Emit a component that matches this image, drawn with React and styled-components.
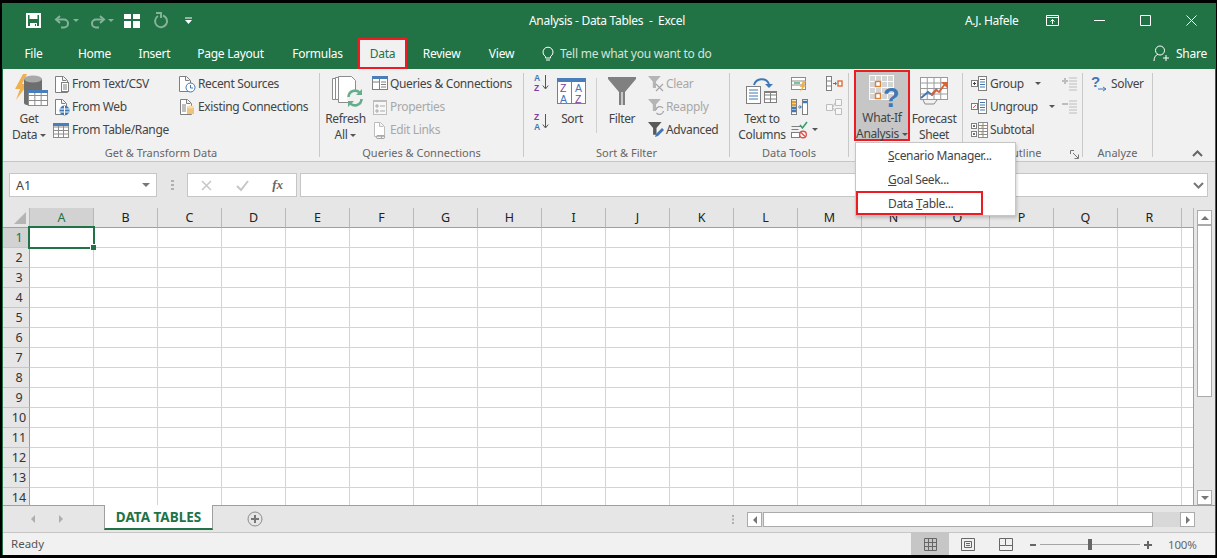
import React from "react";
import styled, { createGlobalStyle } from "styled-components";

const GREEN = "#217346";
const RED = "#ed1c24";
const COLS = "ABCDEFGHIJKLMNOPQR".split("");
const ROWS = Array.from({ length: 14 }, (_, i) => i + 1);

const TABS = [
  { name: "File", w: 61 },
  { name: "Home", w: 61 },
  { name: "Insert", w: 59 },
  { name: "Page Layout", w: 93 },
  { name: "Formulas", w: 81 },
  { name: "Data", w: 49, active: true },
  { name: "Review", w: 69 },
  { name: "View", w: 51 },
];

const Global = createGlobalStyle`
  html, body { margin: 0; background: #000; overflow: hidden; }
  body { font-family: "Noto Sans", "Open Sans", Arial, sans-serif; font-size: 12px; color: #444; }
`;

const Window = styled.div`
  width: 1212px;
  height: 552px;
  margin: 3px 0 0 3px;
  background: ${GREEN};
  box-shadow: -1px 0 0 ${GREEN}, 1px 0 0 ${GREEN}, 0 1px 0 ${GREEN};
  display: flex;
  flex-direction: column;
  overflow: hidden;
`;

const TitleBar = styled.div`
  height: 35px;
  flex: none;
  display: flex;
  align-items: center;
  color: #fff;
`;

const Qat = styled.div`
  width: 526px;
  flex: none;
  padding-left: 23px;
  box-sizing: border-box;
  display: flex;
  align-items: center;
`;

const QatSlot = styled.span`
  display: flex;
  width: ${(p) => p.$w}px;
  opacity: ${(p) => (p.$faded ? 0.45 : 1)};
`;

const QatCaret = styled.span`
  width: 0;
  height: 0;
  margin-left: -1px;
  border: 3px solid transparent;
  border-top: 3px solid #fff;
  border-bottom: 0;
`;

const Title = styled.div`
  font-size: 12px;
  white-space: pre;
  letter-spacing: -0.3px;
`;

const User = styled.div`
  margin-left: auto;
  width: 65px;
  font-size: 12px;
  letter-spacing: -0.3px;
`;

const WinBtn = styled.div`
  width: 46px;
  display: flex;
  justify-content: center;
`;

const WinEnd = styled.div`
  width: 1px;
`;

const TabBar = styled.div`
  height: 31px;
  flex: none;
  display: flex;
  align-items: stretch;
  color: #fff;
`;

const Tab = styled.div`
  width: ${(p) => p.$w}px;
  box-sizing: border-box;
  display: flex;
  align-items: center;
  justify-content: center;
  font-size: 12px;
  letter-spacing: -0.25px;
  ${(p) => p.$active && `
    background: #f1f1f1;
    color: ${GREEN};
    border: 2px solid ${RED};
  `}
`;

const TellMe = styled.div`
  margin-left: 15px;
  display: flex;
  align-items: center;
  gap: 6px;
  font-size: 12px;
  letter-spacing: -0.25px;
  color: #d3e3da;
`;

const Share = styled.div`
  margin-left: auto;
  padding-right: 8px;
  display: flex;
  align-items: center;
  gap: 7px;
  font-size: 12px;
  letter-spacing: -0.25px;
`;

const Ribbon = styled.div`
  height: 93px;
  flex: none;
  box-sizing: border-box;
  background: #f1f1f1;
  border-bottom: 1px solid #c6c6c6;
  padding-top: 4px;
  display: flex;
  align-items: flex-start;
`;

const Group = styled.div`
  position: relative;
  width: ${(p) => p.$w}px;
  height: 84px;
  flex: none;
  box-sizing: border-box;
  border-right: 1px solid #c9c9c9;
  display: flex;
  flex-direction: column;
`;

const GroupBody = styled.div`
  height: 75px;
  flex: none;
  margin-top: -1px;
  margin-bottom: 1px;
  display: flex;
  align-items: flex-start;
  padding-left: ${(p) => p.$pad || 0}px;
`;

const GroupLabel = styled.div`
  height: 9px;
  line-height: 10px;
  font-size: 11px;
  text-align: center;
  color: #666;
  white-space: nowrap;
`;

const Big = styled.div`
  width: ${(p) => p.$w}px;
  flex: none;
  display: flex;
  flex-direction: column;
  align-items: center;
  margin-top: 2px;
  margin-left: ${(p) => p.$ml || 0}px;
`;

const BigIcon = styled.div`
  height: 38px;
  flex: none;
  margin-top: -1px;
  display: flex;
  align-items: flex-start;
  justify-content: center;
`;

const BigText = styled.div`
  flex: none;
  line-height: 16px;
  text-align: center;
  white-space: nowrap;
  font-size: 12px;
  letter-spacing: -0.35px;
`;

const Caret = styled.span`
  display: inline-block;
  width: 0;
  height: 0;
  margin-left: ${(p) => p.$ml ?? 3}px;
  vertical-align: 2px;
  border: 3px solid transparent;
  border-top: 3px solid #555;
  border-bottom: 0;
`;

const Col = styled.div`
  width: ${(p) => p.$w}px;
  flex: none;
  display: flex;
  flex-direction: column;
  margin-left: ${(p) => p.$ml || 0}px;
`;

const Small = styled.div`
  height: 23px;
  display: flex;
  align-items: center;
  gap: 1px;
  white-space: nowrap;
  font-size: 12px;
  letter-spacing: -0.35px;
  color: ${(p) => (p.$off ? "#a8a8a8" : "#444")};
`;

const SortCell = styled.div`
  height: ${(p) => p.$h}px;
  padding-top: ${(p) => p.$top}px;
  box-sizing: border-box;
`;

const Divider = styled.div`
  width: 1px;
  height: 55px;
  margin: 6px 0 0 ${(p) => p.$ml || 0}px;
  background: #d0d0d0;
  flex: none;
`;

const WhatIf = styled.div`
  width: 56px;
  height: 71px;
  margin: -2px 0 0 0;
  flex: none;
  box-sizing: border-box;
  background: #c6c6c6;
  border: 2px solid ${RED};
  display: flex;
  flex-direction: column;
  align-items: center;
  padding-top: 3px;
`;

const Menu = styled.div`
  position: absolute;
  left: 6px;
  top: 69px;
  z-index: 5;
  width: 161px;
  height: 74px;
  box-sizing: border-box;
  background: #fff;
  border: 1px solid #c6c6c6;
  box-shadow: 1px 2px 3px rgba(0, 0, 0, 0.18);
`;

const MenuItem = styled.div`
  height: 24px;
  width: 127px;
  box-sizing: border-box;
  padding-left: ${(p) => (p.$hit ? 30 : 32)}px;
  display: flex;
  align-items: center;
  white-space: pre;
  font-size: 12px;
  letter-spacing: -0.35px;
  border: ${(p) => (p.$hit ? `2px solid ${RED}` : "0")};
`;

const Launcher = styled.div`
  position: absolute;
  right: 3px;
  bottom: -2px;
  display: flex;
`;

const Collapse = styled.div`
  margin: 0 12px 0 auto;
  align-self: flex-end;
  padding-bottom: 4px;
  display: flex;
`;

const FormulaRow = styled.div`
  height: 46px;
  flex: none;
  background: #e6e6e6;
  padding: 11px 7px 0 6px;
  box-sizing: border-box;
  display: flex;
  align-items: flex-start;
`;

const Field = styled.div`
  height: 24px;
  box-sizing: border-box;
  background: #fff;
  border: 1px solid #c6c6c6;
  display: flex;
  align-items: center;
`;

const NameBox = styled(Field)`
  width: 148px;
  padding: 0 6px;
  justify-content: space-between;
  font-size: 12.5px;
`;

const Dots = styled.div`
  width: 30px;
  display: flex;
  justify-content: center;
  padding-top: 7px;
`;

const FxBox = styled(Field)`
  width: 110px;
  margin-right: 3px;
  justify-content: space-between;
  padding: 0 13px 0 13px;
`;

const FxText = styled.i`
  font-family: "Liberation Serif", serif;
  font-weight: bold;
  font-size: 13px;
  color: #666;
`;

const FormulaInput = styled(Field)`
  flex: 1;
  justify-content: flex-end;
  padding-right: 3px;
`;

const SheetRow = styled.div`
  height: 297px;
  flex: none;
  display: flex;
  background: #e6e6e6;
`;

const Sheet = styled.div`
  position: relative;
  width: 1191px;
  flex: none;
  overflow: hidden;
  display: grid;
  grid-template-columns: 27px repeat(18, 64px) 12px;
  grid-auto-rows: 20px;
  background: #fff;
`;

const Corner = styled.div`
  background: #e6e6e6;
  border-right: 1px solid #b8b8b8;
  border-bottom: 1px solid #9f9f9f;
  box-sizing: border-box;
  position: relative;

  &::after {
    content: "";
    position: absolute;
    right: 3px;
    bottom: 3px;
    width: 12px;
    height: 12px;
    background: #b4b4b4;
    clip-path: polygon(100% 0, 100% 100%, 0 100%);
  }
`;

const ColHead = styled.div`
  box-sizing: border-box;
  background: ${(p) => (p.$on ? "#d2d2d2" : "#e6e6e6")};
  color: ${(p) => (p.$on ? GREEN : "#222")};
  border-right: 1px solid #b8b8b8;
  border-bottom: 1px solid #9f9f9f;
  text-align: center;
  line-height: 19px;
  font-size: 12.5px;
`;

const RowHead = styled.div`
  box-sizing: border-box;
  background: ${(p) => (p.$on ? "#d2d2d2" : "#e6e6e6")};
  color: ${(p) => (p.$on ? GREEN : "#333")};
  border-right: 1px solid #9f9f9f;
  border-bottom: 1px solid #c6c6c6;
  text-align: center;
  line-height: 20px;
  padding-left: 6px;
  font-size: 12.5px;
`;

const Cell = styled.div`
  box-sizing: border-box;
  border-right: 1px solid #d4d4d4;
  border-bottom: 1px solid #d4d4d4;
`;

const EdgeLine = styled.div`
  position: absolute;
  right: 0;
  top: 19px;
  bottom: 0;
  width: 1px;
  background: #9f9f9f;
`;

const Selection = styled.div`
  position: absolute;
  left: 25px;
  top: 18px;
  width: 67px;
  height: 23px;
  box-sizing: border-box;
  border: 2px solid ${GREEN};

  &::after {
    content: "";
    position: absolute;
    right: -3px;
    bottom: -3px;
    width: 5px;
    height: 5px;
    background: ${GREEN};
    border: 1px solid #fff;
    border-width: 1px 0 0 1px;
  }
`;

const VScroll = styled.div`
  width: 21px;
  flex: none;
  box-sizing: border-box;
  padding: 2px 0 0 3px;
  display: flex;
  flex-direction: column;
`;

const ScrollBtn = styled.div`
  width: 15px;
  height: 15px;
  flex: none;
  box-sizing: border-box;
  background: #fff;
  border: 1px solid #ababab;
  display: flex;
  align-items: center;
  justify-content: center;
`;

const VThumb = styled.div`
  width: 15px;
  height: 172px;
  margin-bottom: auto;
  flex: none;
  box-sizing: border-box;
  background: #fff;
  border: 1px solid #ababab;
`;

const Arrow = styled.span`
  width: 0;
  height: 0;
  border: 4px solid transparent;
  ${(p) => `border-${p.$to}: 0; border-${{ top: "bottom", bottom: "top", left: "right", right: "left" }[p.$to]}: 4px solid #777;`}
`;

const SheetBar = styled.div`
  height: 28px;
  flex: none;
  box-sizing: border-box;
  background: #e6e6e6;
  border-top: 1px solid #9f9f9f;
  border-bottom: 1px solid #c6c6c6;
  display: flex;
  align-items: flex-start;
`;

const SheetNav = styled.div`
  width: 101px;
  height: 26px;
  flex: none;
  display: flex;
  align-items: center;
  padding-left: 28px;
  box-sizing: border-box;
  gap: 24px;
  opacity: 0.5;
`;

const SheetTab = styled.div`
  width: 109px;
  height: 25px;
  margin-top: -1px;
  flex: none;
  box-sizing: border-box;
  background: #fff;
  border-bottom: 2px solid ${GREEN};
  border-left: 1px solid #9f9f9f;
  border-right: 1px solid #9f9f9f;
  color: ${GREEN};
  font-weight: 700;
  font-size: 13.5px;
  text-align: center;
  line-height: 24px;
`;

const AddSheet = styled.div`
  margin: 5px 0 0 34px;
  display: flex;
`;

const BarGrip = styled.div`
  margin: 9px 0 0 auto;
  display: flex;
`;

const HScroll = styled.div`
  margin: 6px 20px 0 13px;
  width: 448px;
  display: flex;
  background: #d8d8d8;
`;

const HThumb = styled.div`
  width: 390px;
  height: 15px;
  box-sizing: border-box;
  margin: 0 auto 0 1px;
  background: #fff;
  border: 1px solid #ababab;
`;

const Status = styled.div`
  height: 22px;
  flex: none;
  background: #f1f1f1;
  display: flex;
  align-items: center;
  padding-left: 8px;
  font-size: 11.5px;
  color: #555;
`;

const ReadyText = styled.span`
  margin-top: -2px;
`;

const ViewBtn = styled.div`
  width: 38px;
  height: 22px;
  display: flex;
  align-items: center;
  justify-content: center;
  background: ${(p) => (p.$on ? "#c6c6c6" : "transparent")};
  margin-left: ${(p) => p.$ml || 0}px;
`;

const Zoom = styled.div`
  width: 138px;
  margin-left: 5px;
  display: flex;
`;

const Percent = styled.div`
  width: 40px;
  font-size: 11.5px;
  letter-spacing: -0.2px;
  color: #666;
`;

const Svg = ({ w = 18, h = 18, children }) => (
  <svg width={w} height={h} viewBox={`0 0 ${w} ${h}`} style={{ flex: "none", display: "block", overflow: "visible" }}>
    {children}
  </svg>
);

// tiny table used by many of the ribbon glyphs
const MiniTable = ({ x, y, w, h, cols = 3, rows = 3, head = "#4a7ebb", line = "#8c8c8c", fill = "#fff" }) => {
  const cw = w / cols;
  const rh = h / rows;
  return (
    <g>
      <rect x={x + 0.5} y={y + 0.5} width={w} height={h} fill={fill} stroke={line} />
      {Array.from({ length: cols - 1 }, (_, i) => (
        <line key={i} x1={x + 0.5 + cw * (i + 1)} x2={x + 0.5 + cw * (i + 1)} y1={y} y2={y + h} stroke={line} />
      ))}
      {Array.from({ length: rows - 1 }, (_, i) => (
        <line key={i} x1={x} x2={x + w} y1={y + 0.5 + rh * (i + 1)} y2={y + 0.5 + rh * (i + 1)} stroke={line} />
      ))}
      {head && <rect x={x} y={y} width={w + 1} height={3} fill={head} />}
    </g>
  );
};

const Page = ({ x = 2, y = 0, w = 11, h = 15, c = "#7f7f7f" }) => (
  <path
    d={`M${x + 0.5} ${y + 0.5}h${w - 4}l4 4v${h - 4}h-${w}z M${x + w - 4.5} ${y + 0.5}v4h4`}
    fill="#fff"
    stroke={c}
  />
);

const Funnel = ({ x = 0, y = 0, s = 1, c = "#7a7a7a" }) => (
  <path
    transform={`translate(${x} ${y}) scale(${s})`}
    d="M0 0h16l-6 7v8h-4v-8z"
    fill={c}
  />
);

const GetDataIcon = () => (
  <Svg w={34} h={36}>
    <path d="M9 1L1 16h5L2 27 14 11H8l5-10z" fill="#f0b050" />
    <path d="M10 6h18v24H10z" fill="#6e6e6e" />
    <ellipse cx="19" cy="6" rx="9" ry="3.5" fill="#a9a9a9" />
    <ellipse cx="19" cy="30" rx="9" ry="3" fill="#6e6e6e" />
    <MiniTable x={14} y={17} w={19} h={15} cols={3} rows={3} />
  </Svg>
);

const TextCsvIcon = () => (
  <Svg>
    <Page x={2} y={1} w={12} h={16} />
    <rect x="8.5" y="7.5" width="7" height="9" fill="#fff" stroke="#7f7f7f" />
    <path d="M10 10h4M10 12h4M10 14h4" stroke="#7f7f7f" />
  </Svg>
);

const WebIcon = () => (
  <Svg>
    <Page x={2} y={1} w={11} h={15} />
    <circle cx="11.5" cy="12.5" r="5" fill="#3f78b5" />
    <path d="M7 11h9M7 14h9M11.5 8v9" stroke="#fff" />
  </Svg>
);

const TableIcon = () => (
  <Svg>
    <MiniTable x={1} y={2} w={15} h={14} cols={3} rows={4} />
  </Svg>
);

const RecentIcon = () => (
  <Svg>
    <Page x={1} y={1} w={11} h={15} />
    <circle cx="12.5" cy="12.5" r="4.5" fill="#fff" stroke="#3f78b5" />
    <path d="M12.5 10v3h2.5" stroke="#3f78b5" fill="none" />
  </Svg>
);

const ExistingIcon = () => (
  <Svg>
    <Page x={2} y={1} w={11} h={15} />
    <path d="M4 7h4M4 9h4M4 11h4M4 13h4" stroke="#7f7f7f" />
    <path d="M9 9h7v7h-7z" fill="#f0c37a" />
    <ellipse cx="12.5" cy="9" rx="3.5" ry="1.5" fill="#f6dcae" />
  </Svg>
);

const RefreshIcon = () => (
  <Svg w={36} h={32}>
    <path d="M0.5 2.5h14v21h-14z" fill="#fff" stroke="#8c8c8c" />
    <path d="M3.5 1.5h15v22h-15z" fill="#fff" stroke="#8c8c8c" />
    <path d="M6.5 0.5h13l4 4v22h-17z" fill="#fff" stroke="#8c8c8c" />
    <circle cx="23" cy="22" r="8" fill="#f1f1f1" />
    <path d="M16.5 21a6.5 6.5 0 0 1 11.5-4M29.5 23a6.5 6.5 0 0 1-11.5 4" fill="none" stroke="#66ad8d" strokeWidth="2.6" />
    <path d="M24 19h6v-6zM22 25h-6v6z" fill="#66ad8d" />
  </Svg>
);

const QueriesIcon = () => (
  <Svg>
    <rect x="1.5" y="1.5" width="15" height="13" fill="#fff" stroke="#7f7f7f" />
    <rect x="1" y="1" width="16" height="3" fill="#4a7ebb" />
    <path d="M8.5 4v10M10 7h5M10 9.5h5M10 12h5M2 7h6" stroke="#7f7f7f" />
  </Svg>
);

const PropsIcon = () => (
  <Svg>
    <rect x="2.5" y="2.5" width="13" height="14" fill="#f7f7f7" stroke="#bdbdbd" />
    <rect x="2" y="2" width="14" height="2" fill="#bdbdbd" />
    <path d="M5 7h2v2H5zM5 12h2v2H5z" fill="none" stroke="#a8a8a8" />
    <path d="M9 8h5M9 13h5" stroke="#a8a8a8" />
  </Svg>
);

const LinksIcon = () => (
  <Svg>
    <Page x={3} y={1} w={10} h={14} c="#bdbdbd" />
    <path d="M6 14.5h4a2 2 0 0 1 0 3H6a2 2 0 0 1 0-3zM10 14.5h3a2 2 0 0 1 0 3h-3" fill="none" stroke="#a8a8a8" />
  </Svg>
);

const SortLetters = ({ top, bottom, topC, botC }) => (
  <Svg w={16} h={18}>
    <text x="1" y="7.5" fontSize="8.5" fontWeight="700" fontFamily="Liberation Sans" fill={topC}>{top}</text>
    <text x="1" y="17.5" fontSize="8.5" fontWeight="700" fontFamily="Liberation Sans" fill={botC}>{bottom}</text>
    <path d="M12.5 2v13M9.8 12.5l2.7 3.5 2.7-3.5" fill="none" stroke="#555" />
  </Svg>
);

const SortBigIcon = () => (
  <Svg w={30} h={27}>
    <rect x="0.5" y="0.5" width="28" height="25" fill="#fff" stroke="#7f7f7f" />
    <rect x="0" y="0" width="29" height="4" fill="#4a7ebb" />
    <path d="M14.5 4v22" stroke="#7f7f7f" />
    <text x="3" y="14" fontSize="10.5" fontFamily="Liberation Sans" fill="#7b3fa0">Z</text>
    <text x="3" y="24.5" fontSize="10.5" fontFamily="Liberation Sans" fill="#3f78b5">A</text>
    <text x="18" y="14" fontSize="10.5" fontFamily="Liberation Sans" fill="#3f78b5">A</text>
    <text x="18" y="24.5" fontSize="10.5" fontFamily="Liberation Sans" fill="#7b3fa0">Z</text>
  </Svg>
);

const FilterIcon = () => (
  <Svg w={28} h={28}>
    <path d="M0 0h28v2L17 15v13h-6V15L0 2z" fill="#808080" />
    <path d="M13 15h2v13h-2z" fill="#c9c9c9" />
  </Svg>
);

const ClearIcon = () => (
  <Svg>
    <Funnel x={1} y={1} s={0.8} c="#b5b5b5" />
    <path d="M9 9l7 7M16 9l-7 7" stroke="#a5a5a5" strokeWidth="1.2" />
  </Svg>
);

const ReapplyIcon = () => (
  <Svg>
    <Funnel x={1} y={1} s={0.8} c="#b5b5b5" />
    <path d="M9 12a4 4 0 0 1 7-2M16.5 13a4 4 0 0 1-7 2" fill="none" stroke="#a5a5a5" strokeWidth="1.3" />
  </Svg>
);

const AdvancedIcon = () => (
  <Svg>
    <Funnel x={1} y={1} s={0.85} c="#595959" />
    <path d="M8 16l1-3 6-6 2 2-6 6z" fill="#3f78b5" />
  </Svg>
);

const TextColumnsIcon = () => (
  <Svg w={32} h={28}>
    <rect x="0.5" y="10.5" width="14" height="17" fill="#fff" stroke="#7f7f7f" />
    <path d="M3 14h9M3 17h9M3 20h9M3 23h9" stroke="#3f78b5" />
    <rect x="18.5" y="15.5" width="12" height="11" fill="#fff" stroke="#7f7f7f" />
    <path d="M18 19h13M18 23h13M24.5 16v10" stroke="#7f7f7f" />
    <rect x="18" y="15" width="13" height="2" fill="#7f7f7f" />
    <path d="M8 9a8 8 0 0 1 15-1" fill="none" stroke="#3f78b5" strokeWidth="2" />
    <path d="M19 8h8l-4 4z" fill="#3f78b5" />
  </Svg>
);

const FlashIcon = () => (
  <Svg>
    <rect x="1.5" y="2.5" width="14" height="12" fill="#fff" stroke="#8c8c8c" />
    <path d="M2 6h13M2 10h13" stroke="#8c8c8c" />
    <rect x="4" y="7" width="6" height="2" fill="#7dc09b" />
    <path d="M13 6l-3 6h2l-2 5 6-7h-2l2-4z" fill="#f0b050" />
  </Svg>
);

const RemoveDupIcon = () => (
  <Svg>
    <rect x="1.5" y="1.5" width="5" height="15" fill="#fff" stroke="#7f7f7f" />
    <path d="M2 4h4M2 7h4" stroke="#e0a030" strokeWidth="2.5" />
    <path d="M2 10h4M2 13h4" stroke="#3f78b5" strokeWidth="2.5" />
    <rect x="12.5" y="1.5" width="5" height="15" fill="#fff" stroke="#7f7f7f" />
    <path d="M13 4h4" stroke="#3f78b5" strokeWidth="2.5" />
    <path d="M8 9h3M9.5 7.5l2 1.5-2 1.5" fill="none" stroke="#3f78b5" />
  </Svg>
);

const ValidationIcon = () => (
  <Svg>
    <path d="M1.5 5.5h10M1.5 8.5h7" stroke="#7f7f7f" />
    <path d="M10 4l2.5 3L17 1" fill="none" stroke="#3f9b6d" strokeWidth="1.6" />
    <rect x="1.5" y="11.5" width="8" height="5" fill="#fff" stroke="#7f7f7f" />
    <circle cx="13" cy="13.5" r="3.3" fill="#fff" stroke="#d9544a" strokeWidth="1.4" />
    <path d="M11 11.5l4 4" stroke="#d9544a" strokeWidth="1.4" />
  </Svg>
);

const ConsolidateIcon = () => (
  <Svg>
    <rect x="1.5" y="1.5" width="5" height="14" fill="#fff" stroke="#7f7f7f" />
    <path d="M2 6h4M2 11h4" stroke="#7f7f7f" />
    <path d="M8 8.5h3" stroke="#3f78b5" />
    <path d="M10 6.5l2 2-2 2z" fill="#3f78b5" />
    <rect x="13" y="6" width="4" height="5" fill="#fff" stroke="#d9703a" strokeWidth="1.4" />
  </Svg>
);

const RelationsIcon = () => (
  <Svg>
    <path d="M1.5 6.5h6v6h-6zM10.5 1.5h6v6h-6zM10.5 10.5h6v6h-6z" fill="#f7f7f7" stroke="#bdbdbd" />
    <path d="M8 9l2-4M8 10l2 3" stroke="#bdbdbd" />
  </Svg>
);

const WhatIfIcon = () => (
  <Svg w={34} h={34}>
    <MiniTable x={1} y={1} w={24} h={24} cols={4} rows={4} head={null} line="#fafafa" fill="#d4d4d4" />
    <rect x="7.5" y="7.5" width="5" height="5" fill="#fff" stroke="#d9843a" strokeWidth="1.4" />
    <rect x="7.5" y="19.5" width="5" height="5" fill="#fff" stroke="#d9843a" strokeWidth="1.4" />
    <text x="15" y="33" fontSize="27" fontWeight="700" fontFamily="Liberation Sans" fill="#3f78b5">?</text>
  </Svg>
);

const ForecastIcon = () => (
  <Svg w={30} h={30}>
    <MiniTable x={1} y={1} w={27} h={22} cols={4} rows={4} head={null} line="#9a9a9a" />
    <path d="M2 22l7-6 4 3 5-6" fill="none" stroke="#3f78b5" strokeWidth="2" />
    <path d="M12 19l5-5 3 2 6-8" fill="none" stroke="#d9643a" strokeWidth="2" />
    <path d="M22 6h7v7z" fill="#d9643a" />
    <path d="M4 24l2 4h9l3-4" fill="none" stroke="#8c8c8c" />
  </Svg>
);

const GroupIcon = ({ mark = "plus" }) => (
  <Svg>
    <rect x="1.5" y="5.5" width="6" height="6" fill="#fff" stroke={mark === "plus" ? "#7f7f7f" : "#d9544a"} />
    {mark === "plus" ? <path d="M3 8.5h3M4.5 7v3" stroke="#444" /> : <path d="M3 10l3-3" stroke="#d9544a" />}
    <rect x="8.5" y="1.5" width="8" height="14" fill="#fff" stroke="#7f7f7f" />
    <path d="M10 4.5h5M10 7h5M10 9.5h5M10 12h5" stroke="#3f78b5" />
  </Svg>
);

const SubtotalIcon = () => (
  <Svg>
    <MiniTable x={8} y={1} w={9} h={15} cols={2} rows={5} head={null} />
    <path d="M11 6h2M11 12h2" stroke="#e0a030" />
    <rect x="1.5" y="2.5" width="5" height="5" fill="#fff" stroke="#7f7f7f" />
    <rect x="1.5" y="10.5" width="5" height="5" fill="#fff" stroke="#7f7f7f" />
    <path d="M3 5h2M4 4v2M3 13h2M4 12v2" stroke="#444" />
  </Svg>
);

const ShowDetailIcon = ({ minus }) => (
  <Svg>
    <path d="M8 3h8M8 6h8M8 9h8M8 12h8M8 15h8" stroke="#bdbdbd" />
    <path d={minus ? "M1 6h6" : "M1 6h6M4 3v6"} stroke="#bdbdbd" strokeWidth="2" />
  </Svg>
);

const SolverIcon = () => (
  <Svg>
    <text x="0" y="12" fontSize="15" fontWeight="700" fontFamily="Liberation Sans" fill="#3f78b5">?</text>
    <path d="M7 14h7M12 12l3 2-3 2" fill="none" stroke="#3f78b5" />
  </Svg>
);

const Chevron = ({ up, c = "#666" }) => (
  <Svg w={11} h={7}>
    <path d={up ? "M1 6l4.5-4.5L10 6" : "M1 1l4.5 4.5L10 1"} fill="none" stroke={c} strokeWidth="2" />
  </Svg>
);

export default function App() {
  return (
    <>
      <Global />
      <Window>
        <TitleBar>
          <Qat>
            <QatSlot $w={29}>
              <Svg w={15} h={15}>
                <path d="M1 1h13v13H1z" fill="none" stroke="#fff" strokeWidth="2" />
                <path d="M3.5 2h8v4h-8zM4 10h7v4H4z" fill="#fff" />
                <path d="M9 11h1v2H9z" fill={GREEN} />
              </Svg>
            </QatSlot>
            <QatSlot $w={19} $faded>
              <Svg w={15} h={15}>
                <path d="M5 3l-4 3.5L5 10" fill="none" stroke="#fff" strokeWidth="2" />
                <path d="M2 6.5h7a4 4 0 0 1 0 8H6" fill="none" stroke="#fff" strokeWidth="2" />
              </Svg>
            </QatSlot>
            <QatSlot $w={16} $faded><QatCaret /></QatSlot>
            <QatSlot $w={19} $faded>
              <Svg w={15} h={15}>
                <path d="M10 3l4 3.5-4 3.5" fill="none" stroke="#fff" strokeWidth="2" />
                <path d="M13 6.5H6a4 4 0 0 0 0 8h3" fill="none" stroke="#fff" strokeWidth="2" />
              </Svg>
            </QatSlot>
            <QatSlot $w={15} $faded><QatCaret /></QatSlot>
            <QatSlot $w={30}>
              <Svg w={16} h={14}>
                <path d="M0 0h7v5H0zM9 0h7v5H9zM0 7h7v7H0zM9 7h7v7H9z" fill="#fff" />
              </Svg>
            </QatSlot>
            <QatSlot $w={31} $faded>
              <Svg w={14} h={15}>
                <path d="M9 2.5a6 6 0 1 1-5 .5" fill="none" stroke="#fff" strokeWidth="2" />
                <path d="M2 0h5v5" fill="none" stroke="#fff" strokeWidth="2" />
              </Svg>
            </QatSlot>
            <QatSlot $w={10}>
              <Svg w={7} h={8}>
                <path d="M0 1h7" stroke="#fff" />
                <path d="M0 3h7L3.5 7z" fill="#fff" />
              </Svg>
            </QatSlot>
          </Qat>
          <Title>{"Analysis - Data Tables  -  Excel"}</Title>
          <User>A.J. Hafele</User>
          <WinBtn>
            <Svg w={14} h={11}>
              <path d="M.5.5h12v10H.5zM.5 2.5h12" fill="none" stroke="#fff" />
              <path d="M6.5 9V4.5M4.5 6.5l2-2 2 2" fill="none" stroke="#fff" />
            </Svg>
          </WinBtn>
          <WinBtn>
            <Svg w={11} h={2}><path d="M0 .5h11" stroke="#fff" /></Svg>
          </WinBtn>
          <WinBtn>
            <Svg w={11} h={11}><path d="M.5.5h10v10H.5z" fill="none" stroke="#fff" /></Svg>
          </WinBtn>
          <WinBtn>
            <Svg w={11} h={11}><path d="M.5.5l10 10M10.5.5l-10 10" stroke="#fff" /></Svg>
          </WinBtn>
          <WinEnd />
        </TitleBar>

        <TabBar>
          {TABS.map((t) => (
            <Tab key={t.name} $w={t.w} $active={t.active}>{t.name}</Tab>
          ))}
          <TellMe>
            <Svg w={12} h={17}>
              <path d="M3.5 11.5a5 5 0 1 1 5 0V13h-5zM4 15h4" fill="none" stroke="#fff" />
            </Svg>
            Tell me what you want to do
          </TellMe>
          <Share>
            <Svg w={16} h={17}>
              <circle cx="7" cy="5.5" r="4.5" fill="none" stroke="#fff" />
              <path d="M1 16c0-4 2-6 4-7M10 13h6M13 10v6" fill="none" stroke="#fff" />
            </Svg>
            Share
          </Share>
        </TabBar>

        <Ribbon>
          <Group $w={317}>
            <GroupBody $pad={5}>
              <Big $w={42}>
                <BigIcon style={{ marginLeft: 4 }}><GetDataIcon /></BigIcon>
                <BigText>Get<br />Data<Caret /></BigText>
              </Big>
              <Col $w={125} $ml={3}>
                <Small><TextCsvIcon />From Text/CSV</Small>
                <Small><WebIcon />From Web</Small>
                <Small style={{ marginLeft: -1, gap: 2 }}><TableIcon />From Table/Range</Small>
              </Col>
              <Col $w={140}>
                <Small style={{ gap: 2 }}><RecentIcon />Recent Sources</Small>
                <Small style={{ gap: 2 }}><ExistingIcon />Existing Connections</Small>
              </Col>
            </GroupBody>
            <GroupLabel>Get &amp; Transform Data</GroupLabel>
          </Group>

          <Group $w={204}>
            <GroupBody $pad={5}>
              <Big $w={41}>
                <BigIcon style={{ paddingTop: 3, height: 35, marginLeft: 8 }}><RefreshIcon /></BigIcon>
                <BigText>Refresh<br />All<Caret /></BigText>
              </Big>
              <Col $w={150} $ml={5}>
                <Small><QueriesIcon />Queries &amp; Connections</Small>
                <Small $off><PropsIcon />Properties</Small>
                <Small $off><LinksIcon />Edit Links</Small>
              </Col>
            </GroupBody>
            <GroupLabel>Queries &amp; Connections</GroupLabel>
          </Group>

          <Group $w={206}>
            <GroupBody $pad={9}>
              <Col $w={24}>
                <SortCell $h={37} $top={1}><SortLetters top="A" bottom="Z" topC="#3f78b5" botC="#7b3fa0" /></SortCell>
                <SortCell $h={36} $top={3}><SortLetters top="Z" bottom="A" topC="#7b3fa0" botC="#3f78b5" /></SortCell>
              </Col>
              <Big $w={30}>
                <BigIcon style={{ paddingTop: 5, height: 33 }}><SortBigIcon /></BigIcon>
                <BigText>Sort</BigText>
              </Big>
              <Divider $ml={9} />
              <Big $w={50}>
                <BigIcon style={{ paddingTop: 4, height: 34 }}><FilterIcon /></BigIcon>
                <BigText>Filter</BigText>
              </Big>
              <Col $w={72}>
                <Small $off><ClearIcon />Clear</Small>
                <Small $off><ReapplyIcon />Reapply</Small>
                <Small><AdvancedIcon />Advanced</Small>
              </Col>
            </GroupBody>
            <GroupLabel>Sort &amp; Filter</GroupLabel>
          </Group>

          <Group $w={119}>
            <GroupBody $pad={4}>
              <Big $w={56}>
                <BigIcon style={{ paddingTop: 3, height: 35 }}><TextColumnsIcon /></BigIcon>
                <BigText>Text to<br />Columns</BigText>
              </Big>
              <Col $w={35}>
                <Small><FlashIcon /></Small>
                <Small><RemoveDupIcon /></Small>
                <Small><ValidationIcon /><Caret /></Small>
              </Col>
              <Col $w={18}>
                <Small><ConsolidateIcon /></Small>
                <Small><RelationsIcon /></Small>
              </Col>
            </GroupBody>
            <GroupLabel>Data Tools</GroupLabel>
          </Group>

          <Group $w={114}>
            <GroupBody $pad={5}>
              <WhatIf>
                <BigIcon style={{ height: 36, marginLeft: 6 }}><WhatIfIcon /></BigIcon>
                <BigText>What-If<br />Analysis<Caret /></BigText>
              </WhatIf>
              <Big $w={48}>
                <BigIcon style={{ paddingTop: 3, height: 35 }}><ForecastIcon /></BigIcon>
                <BigText>Forecast<br />Sheet</BigText>
              </Big>
            </GroupBody>
            <Menu>
              <MenuItem><u>S</u>cenario Manager...</MenuItem>
              <MenuItem><u>G</u>oal Seek...</MenuItem>
              <MenuItem $hit>Data <u>T</u>able...</MenuItem>
            </Menu>
          </Group>

          <Group $w={120}>
            <GroupBody $pad={7}>
              <Col $w={91}>
                <Small style={{ gap: 2 }}>
                  <GroupIcon />Group<Caret $ml={9} />
                </Small>
                <Small style={{ gap: 2 }}>
                  <GroupIcon mark="minus" />Ungroup<Caret $ml={9} />
                </Small>
                <Small style={{ gap: 2 }}><SubtotalIcon />Subtotal</Small>
              </Col>
              <Col $w={18}>
                <Small><ShowDetailIcon /></Small>
                <Small><ShowDetailIcon minus /></Small>
              </Col>
            </GroupBody>
            <GroupLabel>Outline</GroupLabel>
            <Launcher>
              <Svg w={9} h={9}>
                <path d="M.5 4V.5H4M3 3l5 5M8.5 4.5v4h-4" fill="none" stroke="#777" />
              </Svg>
            </Launcher>
          </Group>

          <Group $w={70}>
            <GroupBody $pad={8}>
              <Small style={{ gap: 2 }}><SolverIcon />Solver</Small>
            </GroupBody>
            <GroupLabel>Analyze</GroupLabel>
          </Group>

          <Collapse><Chevron up /></Collapse>
        </Ribbon>

        <FormulaRow>
          <NameBox>
            A1
            <Arrow $to="bottom" />
          </NameBox>
          <Dots>
            <Svg w={3} h={11}>
              <path d="M0 0h3v2H0zM0 4h3v2H0zM0 8h3v2H0z" fill="#b0b0b0" />
            </Svg>
          </Dots>
          <FxBox>
            <Svg w={11} h={11}><path d="M1 1l9 9M10 1l-9 9" stroke="#c6c6c6" strokeWidth="1.5" /></Svg>
            <Svg w={13} h={11}><path d="M1 6l4 4 7-9" fill="none" stroke="#c6c6c6" strokeWidth="2" /></Svg>
            <FxText>fx</FxText>
          </FxBox>
          <FormulaInput><Chevron c="#777" /></FormulaInput>
        </FormulaRow>

        <SheetRow>
          <Sheet>
            <Corner />
            {COLS.map((c, i) => (
              <ColHead key={c} $on={i === 0}>{c}</ColHead>
            ))}
            <ColHead />
            {ROWS.map((r) => (
              <React.Fragment key={r}>
                <RowHead $on={r === 1}>{r}</RowHead>
                {COLS.map((c) => <Cell key={c} />)}
                <Cell />
              </React.Fragment>
            ))}
            <EdgeLine />
            <Selection />
          </Sheet>
          <VScroll>
            <ScrollBtn><Arrow $to="top" /></ScrollBtn>
            <VThumb />
            <ScrollBtn><Arrow $to="bottom" /></ScrollBtn>
          </VScroll>
        </SheetRow>

        <SheetBar>
          <SheetNav>
            <Arrow $to="left" />
            <Arrow $to="right" />
          </SheetNav>
          <SheetTab>DATA TABLES</SheetTab>
          <AddSheet>
            <Svg w={16} h={16}>
              <circle cx="8" cy="8" r="7" fill="none" stroke="#8c8c8c" />
              <path d="M4 8h8M8 4v8" stroke="#777" strokeWidth="2" />
            </Svg>
          </AddSheet>
          <BarGrip>
            <Svg w={2} h={9}>
              <path d="M0 0h2v2H0zM0 3.5h2v2H0zM0 7h2v2H0z" fill="#b0b0b0" />
            </Svg>
          </BarGrip>
          <HScroll>
            <ScrollBtn><Arrow $to="left" /></ScrollBtn>
            <HThumb />
            <ScrollBtn><Arrow $to="right" /></ScrollBtn>
          </HScroll>
        </SheetBar>

        <Status>
          <ReadyText>Ready</ReadyText>
          <ViewBtn $on $ml={867}>
            <Svg w={13} h={13}><path d="M.5.5h12v12H.5zM4.5 0v13M8.5 0v13M0 4.5h13M0 8.5h13" fill="none" stroke="#666" /></Svg>
          </ViewBtn>
          <ViewBtn>
            <Svg w={14} h={13}><path d="M.5.5h13v12H.5zM3.5 3.5h7v6h-7zM5 5.5h4M5 7.5h4" fill="none" stroke="#666" /></Svg>
          </ViewBtn>
          <ViewBtn>
            <Svg w={14} h={13}><path d="M.5.5h13v12H.5zM.5 7.5h6v-7M6.5 7.5h7" fill="none" stroke="#666" /></Svg>
          </ViewBtn>
          <Zoom>
            <Svg w={126} h={13}>
              <path d="M0 6h6v2H0z" fill="#666" />
              <path d="M10 6.5h100" stroke="#a6a6a6" />
              <path d="M58 1h4v11h-4z" fill="#666" />
              <path d="M114 6h8v2h-8zM117 3h2v8h-2z" fill="#666" />
            </Svg>
          </Zoom>
          <Percent>100%</Percent>
        </Status>
      </Window>
    </>
  );
}
